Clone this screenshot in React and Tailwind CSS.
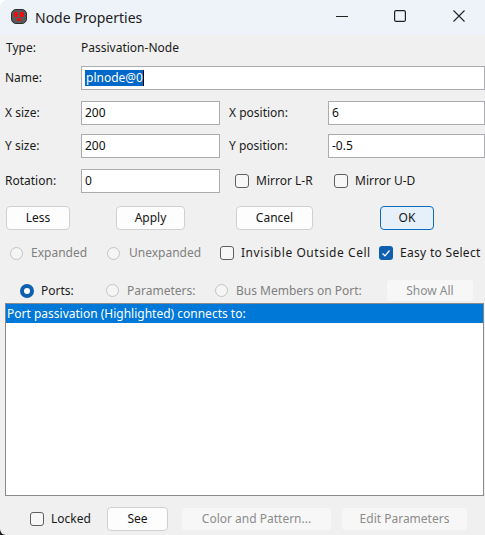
import React from "react";

const Field = ({ value, className = "" }) => (
  <div className={`h-[24px] bg-white border border-[#ababb0] pl-[3px] flex items-center text-[#101010] ${className}`}>{value}</div>
);

const Btn = ({ children, className = "", disabled = false }) => (
  <div
    className={`h-[24px] rounded-[4px] border flex items-center justify-center ${
      disabled ? "border-[#f0f0f0] bg-[#f7f7f7] text-[#8c8c8c]" : "border-[#d0d0d0] bg-[#fdfdfd] text-[#151515]"
    } ${className}`}
  >
    {children}
  </div>
);

const Check = ({ checked = false }) =>
  checked ? (
    <div className="w-[14px] h-[14px] rounded-[3px] bg-[#0f5fb0] flex items-center justify-center">
      <svg width="10" height="10" viewBox="0 0 10 10" fill="none" stroke="#fff" strokeWidth="1.2">
        <path d="M1.5 5.5 L4 7.8 L8.5 2.5" />
      </svg>
    </div>
  ) : (
    <div className="w-[14px] h-[14px] rounded-[3px] border border-[#606060] bg-[#f7f7f7]" />
  );

const Radio = ({ on = false }) =>
  on ? (
    <div className="w-[14px] h-[14px] rounded-full bg-[#0f5fb0] flex items-center justify-center">
      <div className="w-[6px] h-[6px] rounded-full bg-white" />
    </div>
  ) : (
    <div className="w-[13px] h-[13px] rounded-full border border-[#c4c4c4] bg-[#f5f5f5]" />
  );

const App = () => {
  return (
    <div className="w-[485px] h-[535px] bg-gradient-to-b from-white from-50% to-[#202020] to-50%">
      <div
        className="w-full h-full overflow-hidden rounded-tl-[8px] rounded-bl-[6px] bg-[#f0f0f0] text-[12px] leading-[16px] text-[#1a1a1a] flex flex-col"
        style={{ fontFamily: '"Noto Sans", sans-serif' }}
      >
        {/* barra de titulo */}
        <div className="h-[35px] bg-[#eef2f9] flex items-center pl-[11px] shrink-0">
          <svg className="mb-[3px]" width="16" height="15" viewBox="0 0 16 15">
            <rect x="0.5" y="0.5" width="15" height="14" rx="4.5" fill="#5a5a5a" stroke="#2e2e2e" />
            <rect x="3" y="3" width="4" height="5" fill="#e81010" />
            <rect x="9" y="3" width="4" height="5" fill="#e81010" />
            <rect x="6" y="9" width="4" height="3" fill="#e81010" />
          </svg>
          <span className="ml-[8px] text-[14px] text-[#202020]">Node Properties</span>
          <div className="ml-auto flex items-center mb-[3px]">
            <svg width="12" height="12" viewBox="0 0 12 12" stroke="#222" fill="none">
              <path d="M0 6.5 H12" />
            </svg>
            <svg className="ml-[46px]" width="12" height="12" viewBox="0 0 12 12" stroke="#222" fill="none" strokeWidth="1.2">
              <rect x="0.6" y="0.6" width="10.8" height="10.8" rx="1.5" />
            </svg>
            <svg className="ml-[47px] mr-[20px]" width="12" height="12" viewBox="0 0 12 12" stroke="#222" fill="none" strokeWidth="1.1">
              <path d="M0.5 0.5 L11.5 11.5 M11.5 0.5 L0.5 11.5" />
            </svg>
          </div>
        </div>

        <div className="flex pl-[6px] mt-[5px] h-[16px] items-center">
          <span className="w-[75px]">Type:</span>
          <span>Passivation-Node</span>
        </div>

        <div className="flex pl-[5px] mt-[10px] items-center">
          <span className="w-[76px]">Name:</span>
          <Field
            className="flex-1"
            value={<span className="bg-[#0068c8] text-white pl-[1px] border-r border-black">plnode@0</span>}
          />
        </div>

        <div className="flex pl-[5px] mt-[11px] items-center">
          <span className="w-[76px]">X size:</span>
          <Field className="w-[139px]" value="200" />
          <span className="ml-[9px] w-[99px]">X position:</span>
          <Field className="flex-1" value="6" />
        </div>

        <div className="flex pl-[5px] mt-[9px] items-center">
          <span className="w-[76px]">Y size:</span>
          <Field className="w-[139px]" value="200" />
          <span className="ml-[9px] w-[99px]">Y position:</span>
          <Field className="flex-1" value="-0.5" />
        </div>

        <div className="flex pl-[5px] mt-[11px] items-center">
          <span className="w-[76px]">Rotation:</span>
          <Field className="w-[139px]" value="0" />
          <div className="ml-[15px]"><Check /></div>
          <span className="ml-[7px] w-[78px]">Mirror L-R</span>
          <Check />
          <span className="ml-[7px]">Mirror U-D</span>
        </div>

        <div className="flex pl-[6px] mt-[13px]">
          <Btn className="w-[64px]">Less</Btn>
          <Btn className="w-[69px] ml-[46px]">Apply</Btn>
          <Btn className="w-[77px] ml-[51px]">Cancel</Btn>
          <Btn className="w-[54px] ml-[67px] !border-[#0f6cbd] !bg-[#e5f0fa]">OK</Btn>
        </div>

        <div className="flex items-center pl-[10px] mt-[15px] h-[16px]">
          <Radio />
          <span className="ml-[8px] w-[76px] text-[#808080]">Expanded</span>
          <Radio />
          <span className="ml-[9px] w-[91px] text-[#808080]">Unexpanded</span>
          <Check />
          <span className="ml-[7px] w-[138px] tracking-[0.55px] whitespace-nowrap">Invisible Outside Cell</span>
          <Check checked />
          <span className="ml-[7px] tracking-[0.3px] whitespace-nowrap">Easy to Select</span>
        </div>

        <div className="flex items-center pl-[20px] mt-[18px]">
          <Radio on />
          <span className="ml-[7px] w-[65px]">Ports:</span>
          <Radio />
          <span className="ml-[8px] w-[88px] text-[#808080]">Parameters:</span>
          <Radio />
          <span className="ml-[8px] w-[150px] text-[#808080] whitespace-nowrap">Bus Members on Port:</span>
          <Btn disabled className="w-[88px] !h-[23px]">Show All</Btn>
        </div>

        <div className="ml-[5px] mr-[1px] mt-[1px] h-[193px] bg-white border border-[#8a8a8a] shrink-0">
          <div className="h-[19px] bg-[#0078d7] text-white pl-[1px] flex items-center whitespace-nowrap">
            Port passivation (Highlighted) connects to:
          </div>
        </div>

        <div className="flex items-center pl-[30px] mt-[11px]">
          <Check />
          <span className="ml-[7px] w-[56px]">Locked</span>
          <Btn className="w-[61px]">See</Btn>
          <Btn disabled className="w-[151px] ml-[13px]">Color and Pattern...</Btn>
          <Btn disabled className="w-[127px] ml-[9px]">Edit Parameters</Btn>
        </div>
      </div>
    </div>
  );
};

export default App;
